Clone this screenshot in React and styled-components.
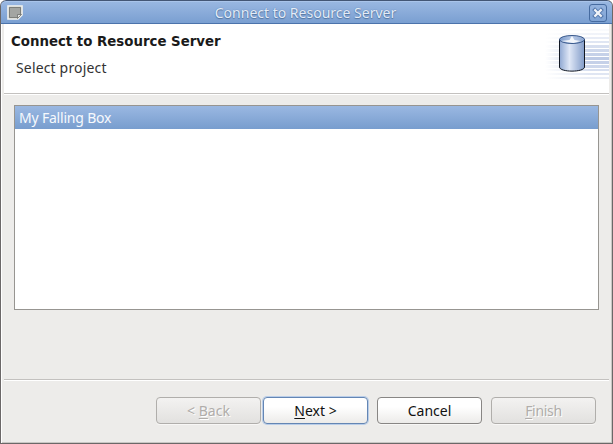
import React from "react";
import styled, { createGlobalStyle } from "styled-components";

const Global = createGlobalStyle`
  *{box-sizing:border-box}
  body{margin:0;background:#fff;overflow:hidden}
`;
const Window = styled.div`
  width:613px;height:444px;display:flex;flex-direction:column;
  background:#edecea;border:1px solid #6b6868;border-top:0;
  border-radius:6px 6px 0 0;overflow:hidden;
  box-shadow:inset 1px 0 #fff,inset -1px 0 #c9c7c4,inset 0 -1px #c9c7c4;
  font-family:"Noto Sans","Open Sans",sans-serif;font-size:14px;color:#1a1a1a;
`;
const TitleBar = styled.div`
  height:24px;flex:none;margin:0 -1px;padding:0 5px 0 6px;
  display:grid;grid-template-columns:20px 1fr 20px;align-items:center;
  border:1px solid #4a6694;border-top-color:#435675;border-bottom-color:#4b73ab;
  border-radius:6px 6px 0 0;
  background:linear-gradient(#9ab8e2,#7a9fd1);box-shadow:inset 0 1px #a9c4ea;
`;
const Title = styled.div`
  text-align:center;color:#e3ecf8;line-height:22px;white-space:nowrap;
  padding:1px 3px 0 0;
  text-shadow:0 0 1px #4a6fa5,0 1px 1px #55779f;
`;
const Close = styled.div`
  width:18px;height:18px;border:1px solid #466ba0;border-radius:3px;justify-self:end;
  display:grid;place-items:center;background:linear-gradient(#94b3df,#7fa3d4);
`;
const Header = styled.header`
  height:69px;flex:none;margin:0 3px;background:#fff;display:flex;justify-content:space-between;
  padding-left:7px;
`;
const Heading = styled.h1`
  margin:9px 0 0;font:bold 13.33px/18px "DejaVu Sans",sans-serif;white-space:nowrap;
`;
const Sub = styled.div`margin:7px 0 0 5px;line-height:20px;color:#333;`;
const Rule = styled.div`height:2px;flex:none;margin:0 3px;background:#fff;border-top:1px solid #c3c1bf;`;
const List = styled.div`
  height:205px;flex:none;margin:10px 13px 0;background:#fff;border:1px solid #979591;
`;
const Item = styled.div`
  height:23px;padding-left:4px;line-height:23px;color:#f6f9fd;
  background:linear-gradient(#9ab8e2,#789dce);
`;
const Spacer = styled.div`flex:1;`;
const Footer = styled.footer`
  height:62px;flex:none;display:flex;padding:16px 0 0 155px;
`;
const Button = styled.button`
  width:105px;height:27px;padding:0;margin:0 ${p => p.$gap}px 0 0;
  font:inherit;line-height:25px;
  border:1px solid ${p => p.$primary ? "#6486b4" : p.disabled ? "#b0aeab" : "#888684"};
  border-radius:4px;
  color:${p => p.disabled ? "#b0adaa" : "#111"};
  text-shadow:${p => p.disabled ? "1px 1px #fff" : "none"};
  background:${p => p.disabled ? "linear-gradient(#f3f2f1,#e2e1df)" : "linear-gradient(#fff 35%,#ecebe9)"};
  box-shadow:${p => p.$primary ? "0 0 0 1px #b9cde8" : "0 1px #f8f7f6"};
`;
const Label = styled.span`letter-spacing:${p => p.$track || 0}px;`;
const Key = styled.span`text-decoration:underline;text-underline-offset:2px;text-decoration-thickness:1px;`;

const NoteIcon = () => (
  <svg width="17" height="15" viewBox="0 0 17 15">
    <path d="M1 1h14v9l-4 4H1z" fill="#9a9c99" stroke="#f3f3ee" strokeWidth="1.6" />
    <path d="M2.5 2.5h11v7l-3 3h-8z" fill="#a3a5a2" stroke="#7d7f7b" />
    <path d="M14.5 9.5h-4v4z" fill="#e4e4e2" stroke="#6b6d69" strokeWidth=".8" />
  </svg>
);
const CloseIcon = () => (
  <svg width="12" height="12" viewBox="0 0 12 12">
    <path d="m3 3 6 6m0-6-6 6" stroke="#5478ad" strokeWidth="4" strokeLinecap="square" />
    <path d="m3.2 3.2 5.6 5.6m0-5.6-5.6 5.6" stroke="#f0f3f8" strokeWidth="2.3" strokeLinecap="square" />
  </svg>
);
const STRIPES = [5, 9, 13, 17, 21, 25, 29, 33, 37, 41, 45, 49, 53];
const DatabaseArt = () => (
  <svg width="64" height="64" viewBox="0 0 64 64">
    <defs>
      <linearGradient id="fade" gradientUnits="userSpaceOnUse" x1="0" x2="44" y1="0" y2="0">
        <stop stopColor="#bdcae5" stopOpacity="0" /><stop offset="1" stopColor="#bdcae5" />
      </linearGradient>
      <linearGradient id="body"><stop stopColor="#8fa8d2" /><stop offset=".4" stopColor="#dfe7f6" /><stop offset="1" stopColor="#829cc9" /></linearGradient>
      <linearGradient id="lid"><stop stopColor="#7898ca" /><stop offset=".5" stopColor="#b9cae6" /><stop offset="1" stopColor="#8ba5d0" /></linearGradient>
    </defs>
    {STRIPES.map((y, i) => (
      <rect key={y} x="0" y={y} width="64" height={i > 3 && i < 10 ? 3 : 2} fill="url(#fade)" opacity={1 - Math.abs(i - 7) * 0.13} />
    ))}
    <path d="M14.5 15v28c0 5.5 25 5.5 25 0V15" fill="url(#body)" stroke="#111722" />
    <ellipse cx="27" cy="15.5" rx="12.5" ry="4" fill="url(#lid)" stroke="#39598c" />
    <path d="m15.5 17 9-1 2.500-4 2.500 4 6 1-7 2z" fill="#fff" opacity=".85" />
  </svg>
);

export default function App() {
  return (
    <>
      <Global />
      <Window>
        <TitleBar>
          <NoteIcon />
          <Title><Label>Connect to Resource Server</Label></Title>
          <Close><CloseIcon /></Close>
        </TitleBar>
        <Header>
          <div>
            <Heading>Connect to Resource Server</Heading>
            <Sub><Label $track={0.16}>Select project</Label></Sub>
          </div>
          <DatabaseArt />
        </Header>
        <Rule />
        <List><Item><Label $track={-0.2}>My Falling Box</Label></Item></List>
        <Spacer />
        <Rule />
        <Footer>
          <Button disabled $gap={2}><Label>&lt; <Key>B</Key>ack</Label></Button>
          <Button $primary $gap={9}><Label>&nbsp;<Key>N</Key>ext &gt;&nbsp;</Label></Button>
          <Button $gap={9}><Label>Cancel</Label></Button>
          <Button disabled $gap={0}><Label $track={-0.3}><Key>F</Key>inish</Label></Button>
        </Footer>
      </Window>
    </>
  );
}
